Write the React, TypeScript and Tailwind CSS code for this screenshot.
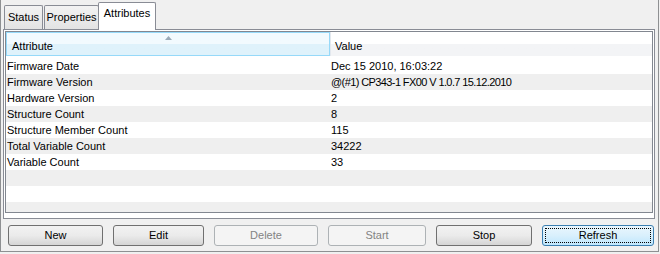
import React from 'react';

type Row = { name: string; value: string; tight?: boolean };

const rows: Row[] = [
  { name: 'Firmware Date', value: 'Dec 15 2010, 16:03:22' },
  { name: 'Firmware Version', value: '@(#1) CP343-1 FX00 V 1.0.7 15.12.2010', tight: true },
  { name: 'Hardware Version', value: '2' },
  { name: 'Structure Count', value: '8' },
  { name: 'Structure Member Count', value: '115' },
  { name: 'Total Variable Count', value: '34222' },
  { name: 'Variable Count', value: '33' },
  { name: '', value: '' },
  { name: '', value: '' },
  { name: '', value: '' },
];

const Tab: React.FC<{ label: string; active?: boolean; className?: string }> = ({ label, active, className }) => (
  <div
    className={
      active
        ? `h-[28px] -mb-[1px] pt-[4px] text-center bg-white border border-b-0 border-[#898c95] rounded-t-[2px] relative z-10 ${className ?? ''}`
        : `h-[24px] pt-[5px] text-center bg-gradient-to-b from-[#f3f3f3] to-[#e3e3e3] border border-b-0 border-[#898c95] rounded-t-[2px] ${className ?? ''}`
    }
  >
    {label}
  </div>
);

const Button: React.FC<{ label: string; width: string; disabled?: boolean; focused?: boolean }> = ({
  label,
  width,
  disabled,
  focused,
}) => {
  if (focused) {
    return (
      <div className={`${width} h-[21px] rounded-[3px] border border-[#3c7fb1] bg-gradient-to-b from-[#eaf6fd] via-[#d9f0fc] to-[#bee6fd] p-[2px]`}>
        <div className="h-full border border-dotted border-black flex items-center justify-center">{label}</div>
      </div>
    );
  }
  return (
    <div
      className={
        disabled
          ? `${width} h-[21px] rounded-[3px] border border-[#adb2b5] bg-[#f4f4f4] text-[#838383] flex items-center justify-center`
          : `${width} h-[21px] rounded-[3px] border border-[#707070] bg-gradient-to-b from-[#f2f2f2] via-[#ebebeb] to-[#d5d5d5] flex items-center justify-center`
      }
    >
      {label}
    </div>
  );
};

export default function App() {
  return (
    <div className="w-[660px] h-[254px] bg-[#f0f0f0] font-['Liberation_Sans',Arial,sans-serif] text-[11px] leading-[13px] text-black">
      <div className="w-[659px] h-[252px] border-x border-b border-[#8e9092] flex flex-col">
        <div className="h-[29px] flex items-end pl-[3px]">
          <Tab label="Status" className="w-[39px]" />
          <Tab label="Properties" className="w-[55px] ml-[1px]" />
          <Tab label="Attributes" active className="w-[58px] -ml-[1px]" />
        </div>
        <div className="h-[190px] ml-[2px] mr-[3px] border border-[#898c95] bg-white p-[1px] pb-[5px]">
          <div className="h-full border border-[#828790] flex flex-col overflow-hidden">
            <div className="h-[24px] shrink-0 flex bg-white">
              <div className="w-[324px] relative border border-[#96d9f9] bg-gradient-to-b from-[#f2fafe] from-50% to-[#dff2fb] to-50% pl-[5px] pt-[4px] flex items-center">
                Attribute
                <svg className="absolute left-[158px] top-[3px]" width="7" height="4" viewBox="0 0 7 4">
                  <path d="M0 4 L3.5 0 L7 4 Z" fill="#9aaab8" />
                </svg>
              </div>
              <div className="flex-1 border-l border-[#e3e8ee] bg-gradient-to-b from-white from-50% to-[#f3f4f6] to-50% pl-[4px] pt-[4px] flex items-center">
                Value
              </div>
            </div>
            <div className="h-[2px] shrink-0 bg-white" />
            {rows.map((r, i) => (
              <div key={i} className={`h-[16px] shrink-0 flex items-center ${i % 2 === 1 ? 'bg-[#efefef]' : 'bg-white'}`}>
                <div className="w-[324px] pl-[1px]">{r.name}</div>
                <div className={`flex-1 pl-[1px] ${r.tight ? 'tracking-[-0.6px]' : ''}`}>{r.value}</div>
              </div>
            ))}
          </div>
        </div>
        <div className="flex gap-[10px] pl-[7px] pt-[6px]">
          <Button label="New" width="w-[95px]" />
          <Button label="Edit" width="w-[91px]" />
          <Button label="Delete" width="w-[104px]" disabled />
          <Button label="Start" width="w-[98px]" disabled />
          <Button label="Stop" width="w-[96px]" />
          <Button label="Refresh" width="w-[112px]" focused />
        </div>
      </div>
    </div>
  );
}
